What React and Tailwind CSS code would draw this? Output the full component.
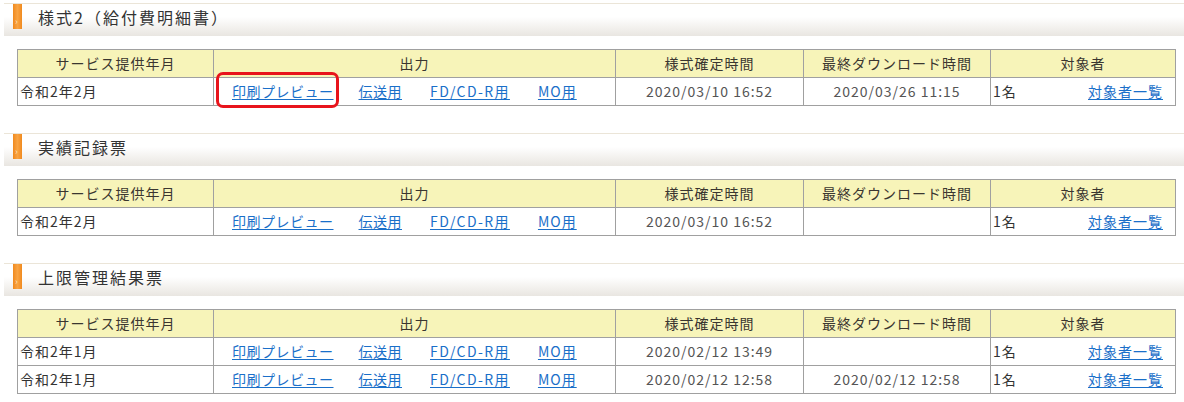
const font = { fontFamily: '"Noto Sans CJK JP", "Noto Sans", sans-serif' }

const sections = [
  {
    title: '様式2（給付費明細書）',
    rows: [{ month: '令和2年2月', fixed: '2020/03/10 16:52', dl: '2020/03/26 11:15', highlight: true }],
  },
  {
    title: '実績記録票',
    rows: [{ month: '令和2年2月', fixed: '2020/03/10 16:52', dl: '' }],
  },
  {
    title: '上限管理結果票',
    rows: [
      { month: '令和2年1月', fixed: '2020/02/12 13:49', dl: '' },
      { month: '令和2年1月', fixed: '2020/02/12 12:58', dl: '2020/02/12 12:58' },
    ],
  },
]

function SectionHeader({ title }) {
  return (
    <div className="flex h-[33px] items-start border-t border-[#ebe5d8] bg-gradient-to-b from-white from-40% to-[#e9e6e1]">
      <div className="relative ml-[9px] h-[25px] w-[9px] bg-gradient-to-r from-[#f08a1c] via-[#f9a443] to-[#f08a1c]">
        <span className="absolute bottom-[3px] left-[2px] text-[9px] leading-none text-[#fde2bf]">›</span>
      </div>
      <h2 className="ml-[16px] mt-[2px] text-[16px] leading-[22px] tracking-[2px] text-[#333]">{title}</h2>
    </div>
  )
}

function Links() {
  return (
    <div className="flex items-center pl-[18px] tracking-[0.5px] text-[#1a6fc9]">
      <a className="underline decoration-1 underline-offset-2">印刷プレビュー</a>
      <a className="ml-[25px] underline decoration-1 underline-offset-2">伝送用</a>
      <a className="ml-[28px] underline decoration-1 tracking-[1.4px] underline-offset-2">FD/CD-R用</a>
      <a className="ml-[28px] underline decoration-1 tracking-[1px] underline-offset-2">MO用</a>
    </div>
  )
}

function DataTable({ rows }) {
  const th = 'h-[28px] border border-[#a0a0a0] bg-[#f7f4b9] text-center font-normal text-[#3a3630] p-0'
  const td = 'h-[28px] border border-[#a0a0a0] p-0'
  return (
    <table className="ml-[13px] mt-[13px] w-[1158px] table-fixed border-collapse text-[14px] tracking-[1px]">
      <colgroup>
        <col className="w-[196px]" />
        <col className="w-[402px]" />
        <col className="w-[188px]" />
        <col className="w-[187px]" />
        <col className="w-[185px]" />
      </colgroup>
      <thead>
        <tr>
          <th className={th}>サービス提供年月</th>
          <th className={th}>出力</th>
          <th className={th}>様式確定時間</th>
          <th className={th}>最終ダウンロード時間</th>
          <th className={th}>対象者</th>
        </tr>
      </thead>
      <tbody>
        {rows.map((r, i) => (
          <tr key={i}>
            <td className={`${td} pl-[2px] text-[#333]`}>{r.month}</td>
            <td className={`${td} relative`}>
              <Links />
              {r.highlight && (
                <span className="pointer-events-none absolute left-[2px] top-[-6px] h-[36px] w-[123px] rounded-[7px] border-[3px] border-[#e8141c]" />
              )}
            </td>
            <td className={`${td} text-center text-[#555]`}>{r.fixed}</td>
            <td className={`${td} text-center text-[#555]`}>{r.dl}</td>
            <td className={`${td} text-[#333]`}>
              <div className="flex items-center justify-between pl-[2px] pr-[12px]">
                <span>1名</span>
                <a className="text-[#1a6fc9] underline decoration-1 underline-offset-2">対象者一覧</a>
              </div>
            </td>
          </tr>
        ))}
      </tbody>
    </table>
  )
}

export default function App() {
  return (
    <div className="h-[402px] w-[1184px] overflow-hidden bg-white pl-[4px] pt-[3px]" style={font}>
      {sections.map((s, i) => (
        <section key={i} className={i > 0 ? 'mt-[27px]' : ''}>
          <SectionHeader title={s.title} />
          <DataTable rows={s.rows} />
        </section>
      ))}
    </div>
  )
}
